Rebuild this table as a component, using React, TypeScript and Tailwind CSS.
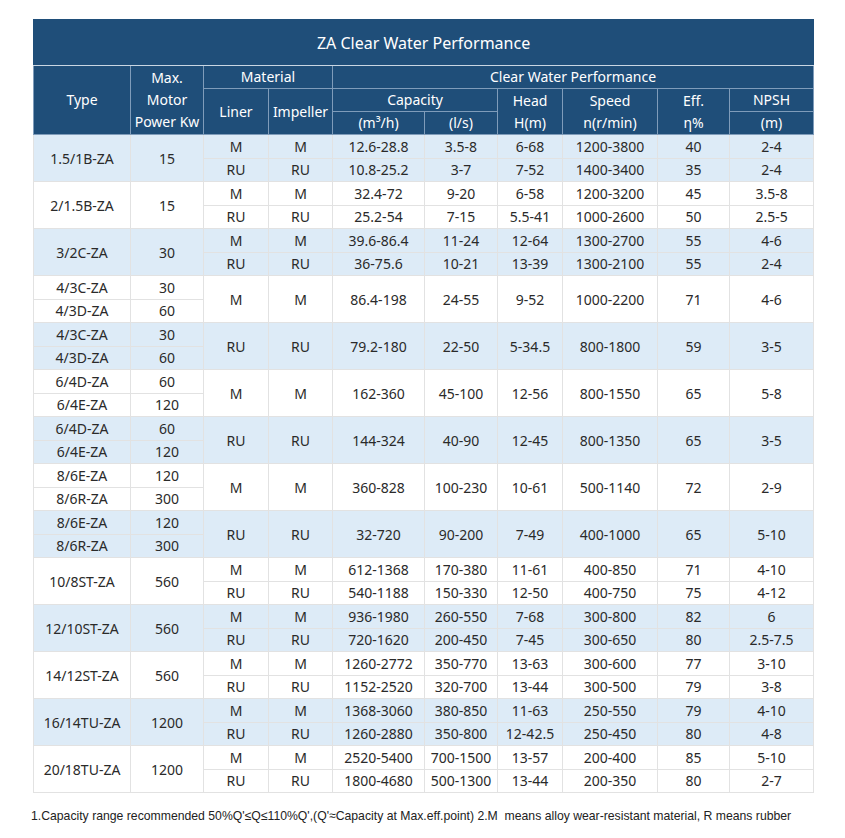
type Perf = [string, string, string, string, string, string, string, string];

type Group =
  | { kind: 'single'; type: string; power: string; rows: [Perf, Perf] }
  | { kind: 'pair'; types: [[string, string], [string, string]]; row: Perf };

const groups: Group[] = [
  {
    kind: 'single',
    type: '1.5/1B-ZA',
    power: '15',
    rows: [
      ['M', 'M', '12.6-28.8', '3.5-8', '6-68', '1200-3800', '40', '2-4'],
      ['RU', 'RU', '10.8-25.2', '3-7', '7-52', '1400-3400', '35', '2-4'],
    ],
  },
  {
    kind: 'single',
    type: '2/1.5B-ZA',
    power: '15',
    rows: [
      ['M', 'M', '32.4-72', '9-20', '6-58', '1200-3200', '45', '3.5-8'],
      ['RU', 'RU', '25.2-54', '7-15', '5.5-41', '1000-2600', '50', '2.5-5'],
    ],
  },
  {
    kind: 'single',
    type: '3/2C-ZA',
    power: '30',
    rows: [
      ['M', 'M', '39.6-86.4', '11-24', '12-64', '1300-2700', '55', '4-6'],
      ['RU', 'RU', '36-75.6', '10-21', '13-39', '1300-2100', '55', '2-4'],
    ],
  },
  {
    kind: 'pair',
    types: [['4/3C-ZA', '30'], ['4/3D-ZA', '60']],
    row: ['M', 'M', '86.4-198', '24-55', '9-52', '1000-2200', '71', '4-6'],
  },
  {
    kind: 'pair',
    types: [['4/3C-ZA', '30'], ['4/3D-ZA', '60']],
    row: ['RU', 'RU', '79.2-180', '22-50', '5-34.5', '800-1800', '59', '3-5'],
  },
  {
    kind: 'pair',
    types: [['6/4D-ZA', '60'], ['6/4E-ZA', '120']],
    row: ['M', 'M', '162-360', '45-100', '12-56', '800-1550', '65', '5-8'],
  },
  {
    kind: 'pair',
    types: [['6/4D-ZA', '60'], ['6/4E-ZA', '120']],
    row: ['RU', 'RU', '144-324', '40-90', '12-45', '800-1350', '65', '3-5'],
  },
  {
    kind: 'pair',
    types: [['8/6E-ZA', '120'], ['8/6R-ZA', '300']],
    row: ['M', 'M', '360-828', '100-230', '10-61', '500-1140', '72', '2-9'],
  },
  {
    kind: 'pair',
    types: [['8/6E-ZA', '120'], ['8/6R-ZA', '300']],
    row: ['RU', 'RU', '32-720', '90-200', '7-49', '400-1000', '65', '5-10'],
  },
  {
    kind: 'single',
    type: '10/8ST-ZA',
    power: '560',
    rows: [
      ['M', 'M', '612-1368', '170-380', '11-61', '400-850', '71', '4-10'],
      ['RU', 'RU', '540-1188', '150-330', '12-50', '400-750', '75', '4-12'],
    ],
  },
  {
    kind: 'single',
    type: '12/10ST-ZA',
    power: '560',
    rows: [
      ['M', 'M', '936-1980', '260-550', '7-68', '300-800', '82', '6'],
      ['RU', 'RU', '720-1620', '200-450', '7-45', '300-650', '80', '2.5-7.5'],
    ],
  },
  {
    kind: 'single',
    type: '14/12ST-ZA',
    power: '560',
    rows: [
      ['M', 'M', '1260-2772', '350-770', '13-63', '300-600', '77', '3-10'],
      ['RU', 'RU', '1152-2520', '320-700', '13-44', '300-500', '79', '3-8'],
    ],
  },
  {
    kind: 'single',
    type: '16/14TU-ZA',
    power: '1200',
    rows: [
      ['M', 'M', '1368-3060', '380-850', '11-63', '250-550', '79', '4-10'],
      ['RU', 'RU', '1260-2880', '350-800', '12-42.5', '250-450', '80', '4-8'],
    ],
  },
  {
    kind: 'single',
    type: '20/18TU-ZA',
    power: '1200',
    rows: [
      ['M', 'M', '2520-5400', '700-1500', '13-57', '200-400', '85', '5-10'],
      ['RU', 'RU', '1800-4680', '500-1300', '13-44', '200-350', '80', '2-7'],
    ],
  },
];

const hd = 'border border-[#7f9cba] font-normal text-white text-center p-0 leading-[22px]';
const td = 'border border-[#e2e2e2] text-center p-0 text-[#2a2a2a]';

function GroupRows({ g, shaded }: { g: Group; shaded: boolean }) {
  const bg = shaded ? 'bg-[#ddebf7]' : 'bg-white';
  if (g.kind === 'single') {
    return (
      <>
        <tr className={`h-[23.5px] ${bg}`}>
          <td rowSpan={2} className={td}>{g.type}</td>
          <td rowSpan={2} className={td}>{g.power}</td>
          {g.rows[0].map((v, i) => (
            <td key={i} className={td}>{v}</td>
          ))}
        </tr>
        <tr className={`h-[23.5px] ${bg}`}>
          {g.rows[1].map((v, i) => (
            <td key={i} className={td}>{v}</td>
          ))}
        </tr>
      </>
    );
  }
  return (
    <>
      <tr className={`h-[23.5px] ${bg}`}>
        <td className={td}>{g.types[0][0]}</td>
        <td className={td}>{g.types[0][1]}</td>
        {g.row.map((v, i) => (
          <td key={i} rowSpan={2} className={td}>{v}</td>
        ))}
      </tr>
      <tr className={`h-[23.5px] ${bg}`}>
        <td className={td}>{g.types[1][0]}</td>
        <td className={td}>{g.types[1][1]}</td>
      </tr>
    </>
  );
}

export default function App() {
  return (
    <div className="w-[845px] h-[838px] bg-white pt-[19px] font-['Noto_Sans',sans-serif] text-[14px]">
      <table className="ml-[33px] w-[780px] table-fixed border-collapse">
        <colgroup>
          <col className="w-[97px]" />
          <col className="w-[73px]" />
          <col className="w-[65px]" />
          <col className="w-[64px]" />
          <col className="w-[92px]" />
          <col className="w-[73px]" />
          <col className="w-[65px]" />
          <col className="w-[95px]" />
          <col className="w-[72px]" />
          <col className="w-[84px]" />
        </colgroup>
        <thead className="bg-[#1f4e79]">
          <tr className="h-[46px]">
            <th colSpan={10} className="border border-[#1f4e79] border-b-[#c9d6e3] font-normal text-white text-[16px] text-center">
              ZA Clear Water Performance
            </th>
          </tr>
          <tr className="h-[23px]">
            <th rowSpan={3} className={hd}>Type</th>
            <th rowSpan={3} className={hd}>
              Max.
              <br />
              Motor
              <br />
              Power Kw
            </th>
            <th colSpan={2} className={hd}>Material</th>
            <th colSpan={6} className={hd}>Clear Water Performance</th>
          </tr>
          <tr className="h-[23px]">
            <th rowSpan={2} className={hd}>Liner</th>
            <th rowSpan={2} className={hd}>Impeller</th>
            <th colSpan={2} className={hd}>Capacity</th>
            <th rowSpan={2} className={hd}>
              Head
              <br />
              H(m)
            </th>
            <th rowSpan={2} className={hd}>
              Speed
              <br />
              n(r/min)
            </th>
            <th rowSpan={2} className={hd}>
              Eff.
              <br />
              η%
            </th>
            <th className={hd}>NPSH</th>
          </tr>
          <tr className="h-[23px]">
            <th className={hd}>(m³/h)</th>
            <th className={hd}>(l/s)</th>
            <th className={hd}>(m)</th>
          </tr>
        </thead>
        <tbody>
          {groups.map((g, i) => (
            <GroupRows key={i} g={g} shaded={i % 2 === 0} />
          ))}
        </tbody>
      </table>
      <p className="mt-[13px] ml-[31px] origin-left scale-x-[0.94] whitespace-nowrap text-[13px] text-[#222] font-['Liberation_Sans',sans-serif]">
        1.Capacity range recommended 50%Q'≤Q≤110%Q',(Q'≈Capacity at Max.eff.point) 2.M&nbsp; means alloy wear-resistant material, R means rubber
      </p>
    </div>
  );
}
